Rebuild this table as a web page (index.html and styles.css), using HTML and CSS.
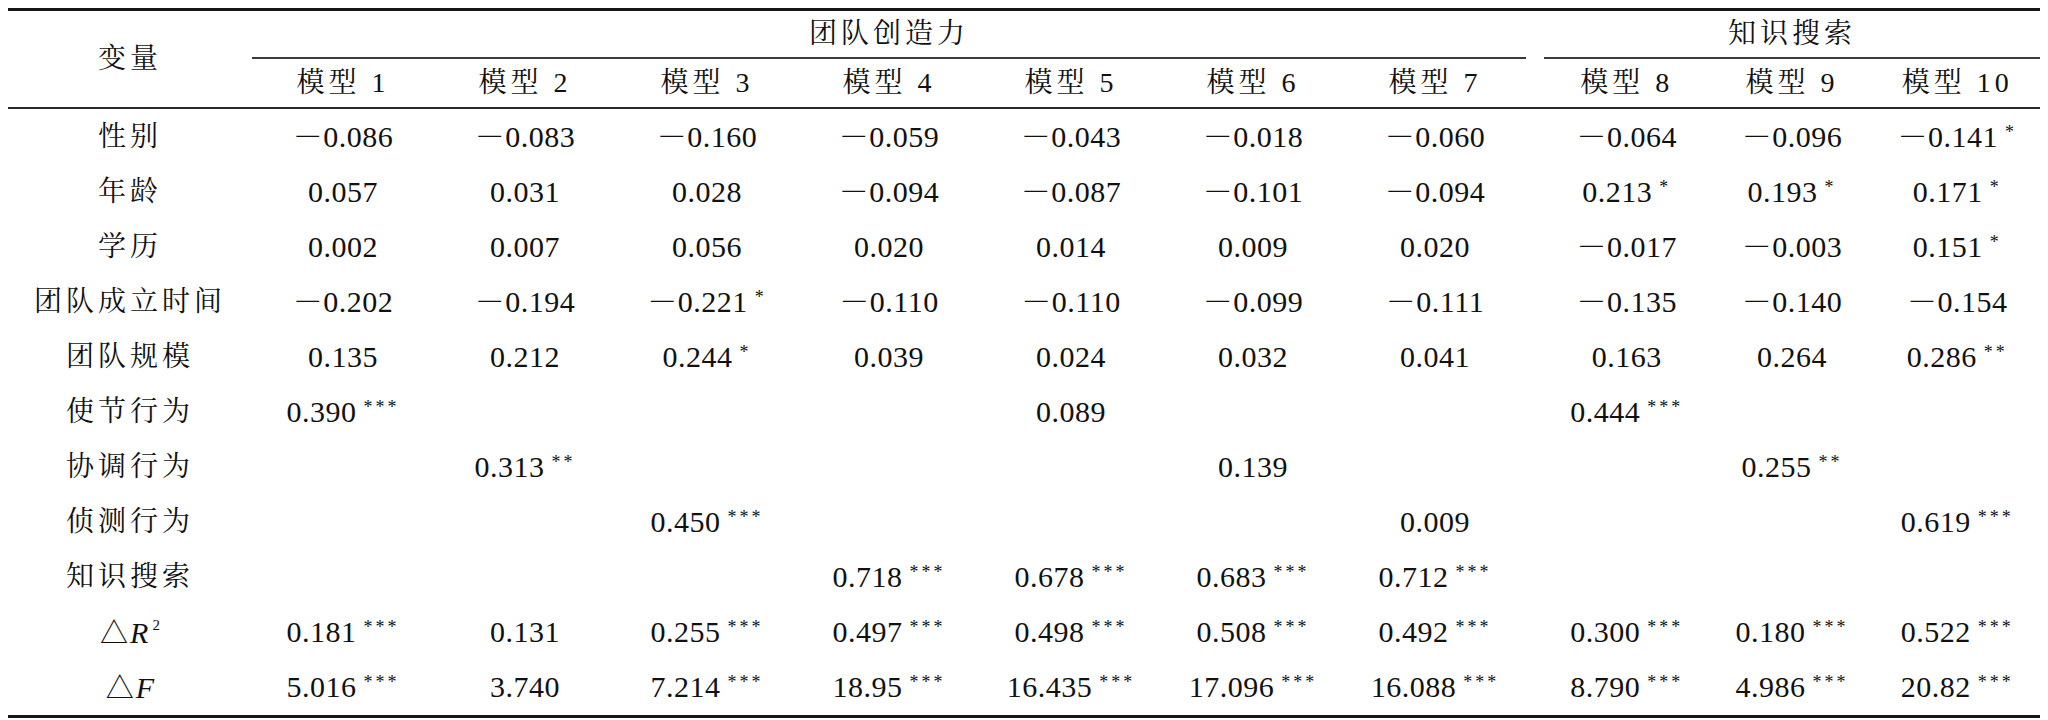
FILE: index.html
```html
<!DOCTYPE html>
<html lang="zh-CN">
<head>
<meta charset="utf-8">
<title>回归分析结果</title>
<link rel="stylesheet" href="styles.css">
</head>
<body>
<table class="reg">
  <colgroup>
    <col class="c-var">
    <col class="c-m"><col class="c-m"><col class="c-m"><col class="c-m"><col class="c-m"><col class="c-m"><col class="c-m">
    <col class="c-gap">
    <col class="c-k"><col class="c-k"><col class="c-k">
  </colgroup>
  <thead>
    <tr class="h1">
      <th rowspan="2" class="lab var">变量</th>
      <th colspan="7" class="lab span">团队创造力</th>
      <th class="gap"></th>
      <th colspan="3" class="lab span">知识搜索</th>
    </tr>
    <tr class="h2">
      <th class="lab">模型 1</th><th class="lab">模型 2</th><th class="lab">模型 3</th><th class="lab">模型 4</th><th class="lab">模型 5</th><th class="lab">模型 6</th><th class="lab">模型 7</th>
      <th class="gap"></th>
      <th class="lab">模型 8</th><th class="lab">模型 9</th><th class="lab">模型 10</th>
    </tr>
  </thead>
  <tbody>
    <tr>
      <td class="lab">性别</td>
      <td>－0.086</td><td>－0.083</td><td>－0.160</td><td>－0.059</td><td>－0.043</td><td>－0.018</td><td>－0.060</td>
      <td class="gap"></td>
      <td>－0.064</td><td>－0.096</td><td>－0.141<sup class="s">*</sup></td>
    </tr>
    <tr>
      <td class="lab">年龄</td>
      <td>0.057</td><td>0.031</td><td>0.028</td><td>－0.094</td><td>－0.087</td><td>－0.101</td><td>－0.094</td>
      <td class="gap"></td>
      <td>0.213<sup class="s">*</sup></td><td>0.193<sup class="s">*</sup></td><td>0.171<sup class="s">*</sup></td>
    </tr>
    <tr>
      <td class="lab">学历</td>
      <td>0.002</td><td>0.007</td><td>0.056</td><td>0.020</td><td>0.014</td><td>0.009</td><td>0.020</td>
      <td class="gap"></td>
      <td>－0.017</td><td>－0.003</td><td>0.151<sup class="s">*</sup></td>
    </tr>
    <tr>
      <td class="lab">团队成立时间</td>
      <td>－0.202</td><td>－0.194</td><td>－0.221<sup class="s">*</sup></td><td>－0.110</td><td>－0.110</td><td>－0.099</td><td>－0.111</td>
      <td class="gap"></td>
      <td>－0.135</td><td>－0.140</td><td>－0.154</td>
    </tr>
    <tr>
      <td class="lab">团队规模</td>
      <td>0.135</td><td>0.212</td><td>0.244<sup class="s">*</sup></td><td>0.039</td><td>0.024</td><td>0.032</td><td>0.041</td>
      <td class="gap"></td>
      <td>0.163</td><td>0.264</td><td>0.286<sup class="s">**</sup></td>
    </tr>
    <tr>
      <td class="lab">使节行为</td>
      <td>0.390<sup class="s">***</sup></td><td></td><td></td><td></td><td>0.089</td><td></td><td></td>
      <td class="gap"></td>
      <td>0.444<sup class="s">***</sup></td><td></td><td></td>
    </tr>
    <tr>
      <td class="lab">协调行为</td>
      <td></td><td>0.313<sup class="s">**</sup></td><td></td><td></td><td></td><td>0.139</td><td></td>
      <td class="gap"></td>
      <td></td><td>0.255<sup class="s">**</sup></td><td></td>
    </tr>
    <tr>
      <td class="lab">侦测行为</td>
      <td></td><td></td><td>0.450<sup class="s">***</sup></td><td></td><td></td><td></td><td>0.009</td>
      <td class="gap"></td>
      <td></td><td></td><td>0.619<sup class="s">***</sup></td>
    </tr>
    <tr>
      <td class="lab">知识搜索</td>
      <td></td><td></td><td></td><td>0.718<sup class="s">***</sup></td><td>0.678<sup class="s">***</sup></td><td>0.683<sup class="s">***</sup></td><td>0.712<sup class="s">***</sup></td>
      <td class="gap"></td>
      <td></td><td></td><td></td>
    </tr>
    <tr>
      <td class="lab stat"><span class="tri">△</span><i>R</i><sup class="sq">2</sup></td>
      <td>0.181<sup class="s">***</sup></td><td>0.131</td><td>0.255<sup class="s">***</sup></td><td>0.497<sup class="s">***</sup></td><td>0.498<sup class="s">***</sup></td><td>0.508<sup class="s">***</sup></td><td>0.492<sup class="s">***</sup></td>
      <td class="gap"></td>
      <td>0.300<sup class="s">***</sup></td><td>0.180<sup class="s">***</sup></td><td>0.522<sup class="s">***</sup></td>
    </tr>
    <tr>
      <td class="lab stat"><span class="tri">△</span><i>F</i></td>
      <td>5.016<sup class="s">***</sup></td><td>3.740</td><td>7.214<sup class="s">***</sup></td><td>18.95<sup class="s">***</sup></td><td>16.435<sup class="s">***</sup></td><td>17.096<sup class="s">***</sup></td><td>16.088<sup class="s">***</sup></td>
      <td class="gap"></td>
      <td>8.790<sup class="s">***</sup></td><td>4.986<sup class="s">***</sup></td><td>20.82<sup class="s">***</sup></td>
    </tr>
  </tbody>
</table>
</body>
</html>
```

FILE: styles.css
```css
html, body {
  background: #ffffff;
}

body {
  margin: 8px;
  color: #111111;
  font-family: "Liberation Serif", "Noto Serif CJK SC", "Noto Sans CJK SC", serif;
}

.reg {
  width: 2032px;
  table-layout: fixed;
  border-collapse: separate;
  border-spacing: 0;
  border-top: 3px solid #161616;
  border-bottom: 3px solid #161616;
  font-size: 30px;
}

.c-var { width: 244px; }
.c-m { width: 182px; }
.c-gap { width: 18px; }
.c-k { width: 165.33px; }

.reg th,
.reg td {
  padding: 0;
  text-align: center;
  font-weight: normal;
  white-space: nowrap;
  letter-spacing: 0.5px;
  line-height: 1;
}

.reg .lab {
  font-size: 28px;
  letter-spacing: 4px;
}

.h1 { height: 48px; }
.h2 { height: 50px; }

.h1 .span {
  border-bottom: 2px solid #3a3a3a;
}

.h1 .var,
.h2 th {
  border-bottom: 2px solid #2a2a2a;
}

.reg tbody tr {
  height: 55.1px;
}

.s {
  font-size: 18px;
  letter-spacing: 3px;
  margin-left: 7px;
  vertical-align: 9px;
  line-height: 0;
}

.reg .stat {
  letter-spacing: 0;
}

.tri {
  font-family: "Noto Sans CJK SC", sans-serif;
  font-size: 28px;
  margin-right: 2px;
}

.stat i {
  font-family: "Liberation Serif", serif;
  font-size: 30px;
  font-style: italic;
}

.sq {
  font-size: 15px;
  vertical-align: 13px;
  line-height: 0;
  margin-left: 4px;
}
```
